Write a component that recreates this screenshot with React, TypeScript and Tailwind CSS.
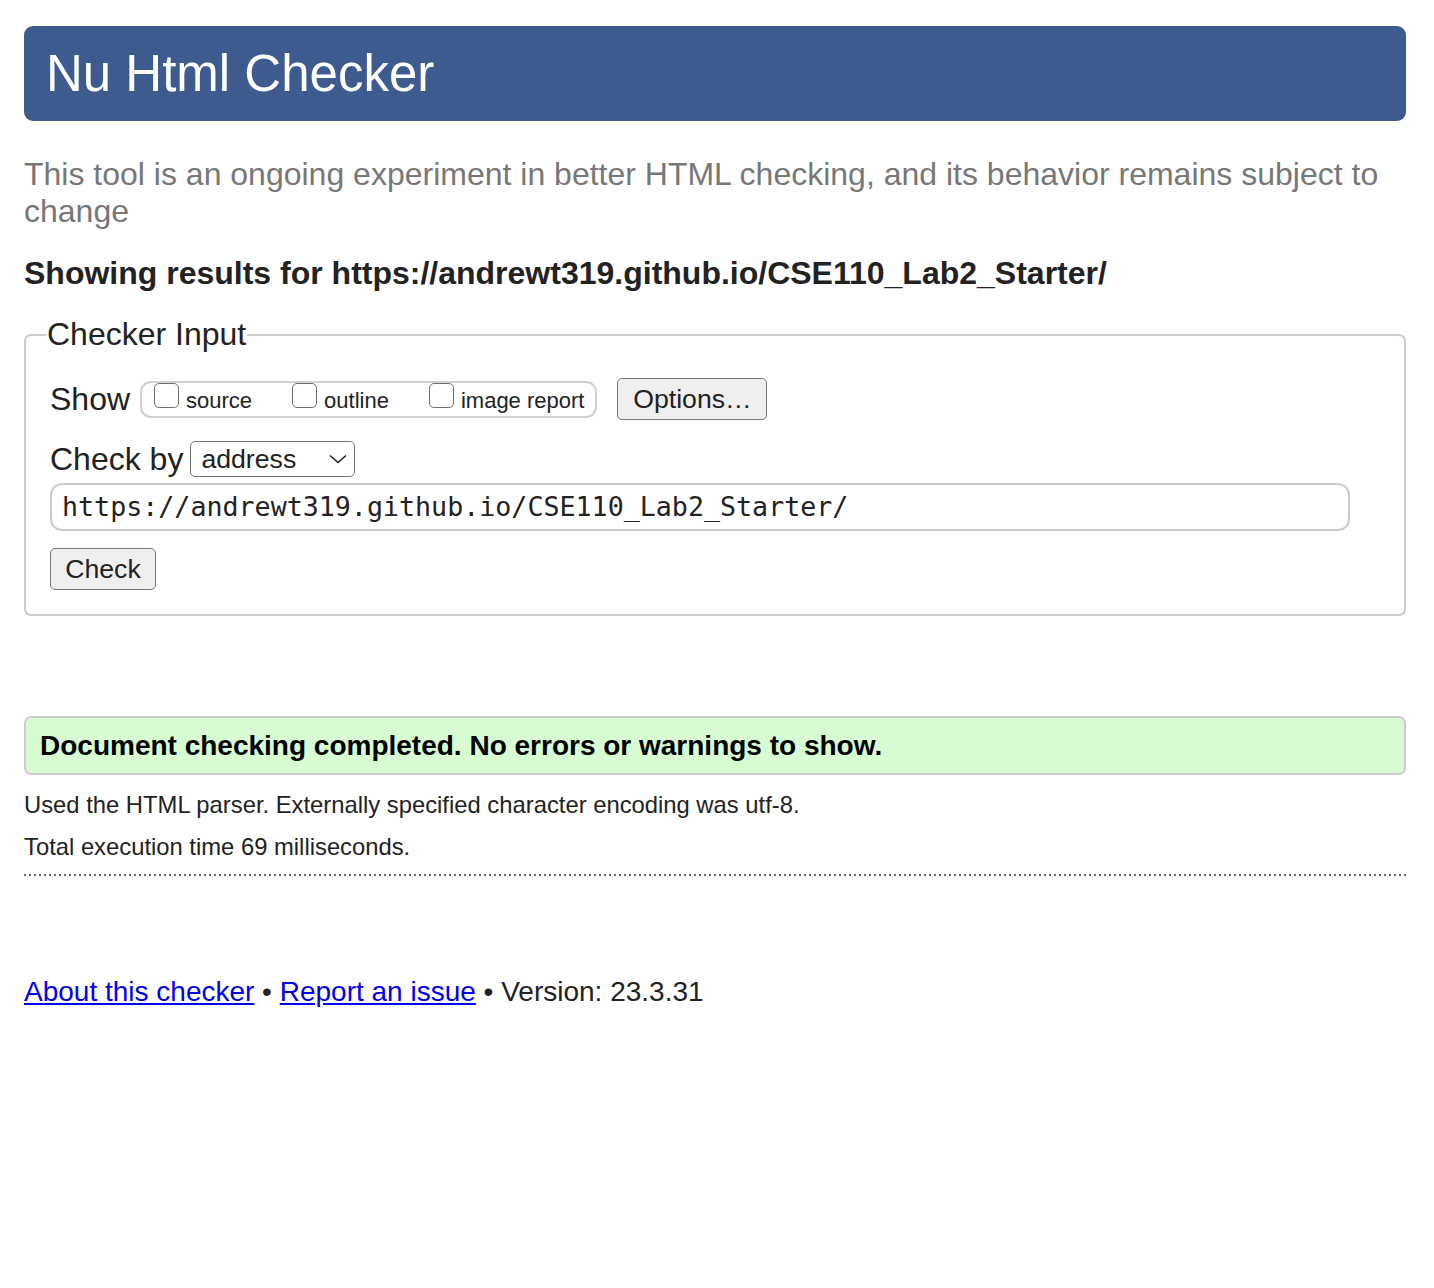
import React from "react";

function Checkbox() {
  return <span className="inline-block w-[25px] h-[25px] shrink-0 rounded-[5px] border-[1.5px] border-[#6e6e6e] bg-white" />;
}

export default function App() {
  return (
    <div className="min-h-[1288px] bg-white pl-[24px] pr-[28px] pt-[26px] text-[#222] font-['Liberation_Sans',Arial,sans-serif]">
      <div className="h-[95px] rounded-[9px] bg-[#3d5b8f] flex items-center pl-[22px]">
        <h1 className="text-white text-[51px] leading-none font-normal">Nu Html Checker</h1>
      </div>

      <p className="mt-[35px] text-[32px] leading-[37px] text-[#777]">
        This tool is an ongoing experiment in better HTML checking, and its behavior remains subject to change
      </p>

      <p className="mt-[25px] text-[32px] leading-[37px] font-bold">
        Showing results for https://andrewt319.github.io/CSE110_Lab2_Starter/
      </p>

      <fieldset className="mt-[24px] border-2 border-[#cccccc] rounded-[7px] pl-[20px] pr-[54px] pb-[24px]">
        <legend className="text-[32px] leading-[37px] px-[1px]">Checker Input</legend>
        <div className="pl-[4px]">
          <div className="mt-[25px] h-[42px] flex items-center">
            <span className="text-[32px] leading-[37px]">Show</span>
            <div className="ml-[10px] h-[37px] rounded-[11px] border-2 border-[#d0d0d0] flex items-start pl-[12px] pr-[11px]">
              <Checkbox />
              <span className="ml-[7px] mt-[5px] text-[22px] leading-[26px]">source</span>
              <span className="ml-[40px]"><Checkbox /></span>
              <span className="ml-[7px] mt-[5px] text-[22px] leading-[26px]">outline</span>
              <span className="ml-[40px]"><Checkbox /></span>
              <span className="ml-[7px] mt-[5px] text-[22px] leading-[26px]">image report</span>
            </div>
            <button className="ml-[20px] w-[150px] h-[42px] rounded-[5px] border-[1.5px] border-[#777] bg-[#efefef] text-[26.67px] leading-none flex items-center justify-center">
              Options…
            </button>
          </div>

          <div className="mt-[21px] h-[36px] flex items-center">
            <span className="text-[32px] leading-[37px]">Check by</span>
            <div className="ml-[7px] w-[165px] h-[36px] rounded-[5px] border-[1.5px] border-[#777] bg-white flex items-center pl-[10px] pr-[7px]">
              <span className="text-[26.67px] leading-none flex-1">address</span>
              <svg width="18" height="10" viewBox="0 0 18 10" fill="none">
                <path d="M1 1.5 L9 8.5 L17 1.5" stroke="#222" strokeWidth="1.6" />
              </svg>
            </div>
          </div>

          <div className="mt-[6px] h-[48px] rounded-[12px] border-2 border-[#cccccc] flex items-center pl-[10px]">
            <span className="text-[26.67px] leading-none font-['DejaVu_Sans_Mono',monospace]">
              https://andrewt319.github.io/CSE110_Lab2_Starter/
            </span>
          </div>

          <button className="mt-[17px] w-[106px] h-[42px] rounded-[5px] border-[1.5px] border-[#777] bg-[#efefef] text-[26.67px] leading-none flex items-center justify-center">
            Check
          </button>
        </div>
      </fieldset>

      <div className="mt-[100px] h-[59px] rounded-[7px] border-2 border-[#cccccc] bg-[#d7fcd1] flex items-center pl-[14px]">
        <span className="text-[28px] leading-none font-bold text-black">
          Document checking completed. No errors or warnings to show.
        </span>
      </div>

      <p className="mt-[16px] text-[23.8px] leading-[28px]">
        Used the HTML parser. Externally specified character encoding was utf-8.
      </p>
      <p className="mt-[14px] text-[23.8px] leading-[28px]">Total execution time 69 milliseconds.</p>

      <div className="mt-[13px] h-[2px] bg-[repeating-linear-gradient(to_right,#666_0px,#666_2px,transparent_2px,transparent_5px)]" />

      <p className="mt-[100px] text-[28px] leading-[32px]">
        <a href="#" className="text-[#0000ee] underline">About this checker</a>
        {" • "}
        <a href="#" className="text-[#0000ee] underline">Report an issue</a>
        {" • Version: 23.3.31"}
      </p>
    </div>
  );
}
